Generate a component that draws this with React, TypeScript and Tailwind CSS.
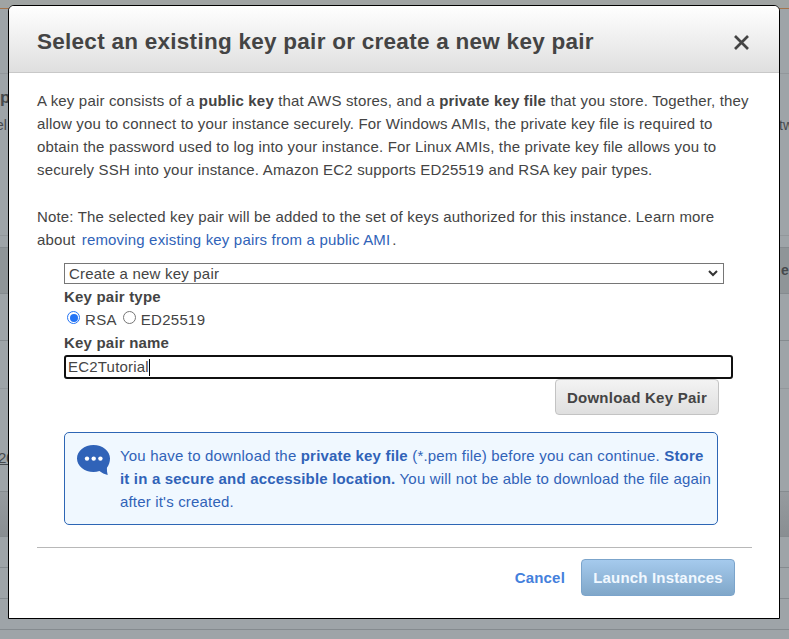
import React from "react";

function Strip({ className, left, right }: { className: string; left?: React.ReactNode; right?: React.ReactNode }) {
  return (
    <div className={"flex shrink-0 items-center justify-between overflow-hidden whitespace-nowrap text-[#464a4d] " + className}>
      <span>{left}</span>
      <span className="w-[10px]">{right}</span>
    </div>
  );
}

function Backdrop() {
  return (
    <div className="flex h-full w-full flex-col bg-[#9ea4a8]">
      <Strip className="h-[9px] border-b border-[#a4744b] bg-[#a0a4a3]" />
      <Strip className="h-[65px] border-b border-[#92979b]" />
      <Strip className="h-[46px] text-[17px] font-bold" left={<span>p</span>} />
      <Strip className="h-[10px] overflow-visible text-[14px]" left={<span className="-ml-[4px]">el</span>} right="tw" />
      <Strip className="h-[106px] border-b border-[#92979b]" />
      <Strip className="h-[11px]" />
      <Strip className="h-[47px] border-y border-[#858b8f] bg-[#8f9598] text-[14px] font-bold" right={<span className="ml-[2px]">e</span>} />
      <Strip className="h-[47px] border-b border-[#858b8f]" />
      <Strip className="h-[48px] border-b border-[#92979b]" />
      <Strip className="h-[102px] pt-[34px] text-[15px] underline" left={<span className="-ml-[2px]">20</span>} />
      <Strip className="h-[46px] border-y border-[#858b8f] bg-linear-to-b from-[#969b9f] to-[#898e92]" />
      <Strip className="h-[31px] border-b border-[#858b8f]" />
      <Strip className="h-[31px] border-b border-[#858b8f]" />
      <Strip className="h-[31px] border-b border-[#858b8f]" />
    </div>
  );
}

function MessageIcon() {
  return (
    <svg width="34" height="31" viewBox="0 0 34 31" className="shrink-0" aria-hidden="true">
      <path d="M16.5 0C7.4 0 0 6 0 13.500S7.400 27 16.500 27c2.100 0 4.100-.3 5.900-.9 2.500 2 5.100 3.200 8.300 3.900-.6-2.400-.9-4.700-.8-7.200C31.900 20.300 33 17.100 33 13.500 33 6 25.600 0 16.500 0Z" fill="#3063b8" />
      <circle cx="10" cy="13.600" r="2.200" fill="#fff" />
      <circle cx="16.700" cy="13.600" r="2.200" fill="#fff" />
      <circle cx="23.400" cy="13.600" r="2.200" fill="#fff" />
    </svg>
  );
}

function Radio({ checked }: { checked?: boolean }) {
  return (
    <span className={"mt-[3px] flex size-[13px] shrink-0 items-center justify-center rounded-full border bg-white " + (checked ? "border-[#2474f5]" : "border-[#767676]")}>
      {checked && <span className="size-[8px] rounded-full bg-[#2474f5]" />}
    </span>
  );
}

export default function App() {
  return (
    <div className="relative h-[639px] w-[789px] overflow-hidden font-['Liberation_Sans',Arial,sans-serif] text-[15px] leading-[23px] text-[#444]">
      <Backdrop />
      <div role="dialog" className="absolute top-[5px] left-[8px] flex h-[614px] w-[772px] flex-col overflow-hidden rounded-t-[6px] border border-black bg-white whitespace-nowrap">
        <header className="flex h-[67px] shrink-0 items-center justify-between border-b border-[#c8c8c8] bg-linear-to-b from-white to-[#dfdfdf] pr-[30px] pl-[28px]">
          <h1 className="mt-[5px] text-[22.500px] leading-[30px] font-bold tracking-[0.27px]">Select an existing key pair or create a new key pair</h1>
          <svg width="15" height="15" viewBox="0 0 15 15" className="mt-[7px]" aria-label="Close">
            <path d="M1 1 14 14M14 1 1 14" stroke="#444" strokeWidth="2.700" />
          </svg>
        </header>

        <div className="flex flex-col px-[28px] pt-[16px] tracking-[0.17px]">
          <p>
            A key pair consists of a <b>public key</b> that AWS stores, and a <b>private key file</b> that you store. Together, they<br />
            allow you to connect to your instance securely. For Windows AMIs, the private key file is required to<br />
            obtain the password used to log into your instance. For Linux AMIs, the private key file allows you to<br />
            securely SSH into your instance. Amazon EC2 supports ED25519 and RSA key pair types.
          </p>
          <p className="mt-[24px]">
            Note: The selected key pair will be added to the set of keys authorized for this instance. Learn more<br />
            about <a className="ml-[2px] text-[#3063b8]">removing existing key pairs from a public AMI</a><span className="ml-[2px]">.</span>
          </p>

          <div className="mt-[12px] ml-[27px] flex w-[669px] flex-col">
            <div className="flex h-[21px] w-[660px] items-center justify-between border border-[#767676] pr-[5px] pl-[4px] tracking-[0.2px]">
              <span>Create a new key pair</span>
              <svg width="10" height="7" viewBox="0 0 10 7" aria-hidden="true">
                <path d="M1 1 5 5 9 1" fill="none" stroke="#333" strokeWidth="2" />
              </svg>
            </div>
            <b className="mt-px tracking-[0.2px]">Key pair type</b>
            <div className="flex h-[23px] pl-[3px] tracking-[0.3px]">
              <Radio checked />
              <span className="ml-[5px]">RSA</span>
              <span className="ml-[6px] flex"><Radio /></span>
              <span className="ml-[5px]">ED25519</span>
            </div>
            <b className="tracking-[0.2px]">Key pair name</b>
            <div className="mt-px flex h-[24px] w-[669px] items-center rounded-[3px] border-2 border-[#101010] pb-[2px] pl-[2px] tracking-[0.2px]">
              EC2Tutorial<span className="mt-[2px] h-[17px] w-px bg-black" />
            </div>
            <button className="ml-[491px] flex h-[36px] w-[164px] items-center justify-center rounded-[4px] border border-[#c3c3c3] bg-linear-to-b from-[#f3f3f3] to-[#dfdfdf] font-bold tracking-[0.25px]">
              Download Key Pair
            </button>

            <div className="mt-[17px] flex h-[93px] w-[654px] rounded-[5px] border border-[#2d66b5] bg-[#f0f8ff] pt-[12px] pl-[12px] text-[#3063b8]">
              <MessageIcon />
              <p className="-mt-px ml-[9px] tracking-[0.18px]">
                You have to download the <b>private key file</b> (*.pem file) before you can continue. <b>Store</b><br />
                <b>it in a secure and accessible location.</b> You will not be able to download the file again<br />
                after it&apos;s created.
              </p>
            </div>
          </div>

          <footer className="mt-[22px] flex w-[715px] items-start justify-end border-t border-[#b8b8b8] pt-[11px] pr-[17px] font-bold tracking-[0.18px]">
            <button className="mr-[16px] h-[37px] text-[#4480dc]">Cancel</button>
            <button className="h-[37px] w-[154px] rounded-[4px] border border-[#7ba4cb] bg-linear-to-b from-[#a5caed] to-[#80a7c9] text-[#f1f8ff]">Launch Instances</button>
          </footer>
        </div>
      </div>
    </div>
  );
}
